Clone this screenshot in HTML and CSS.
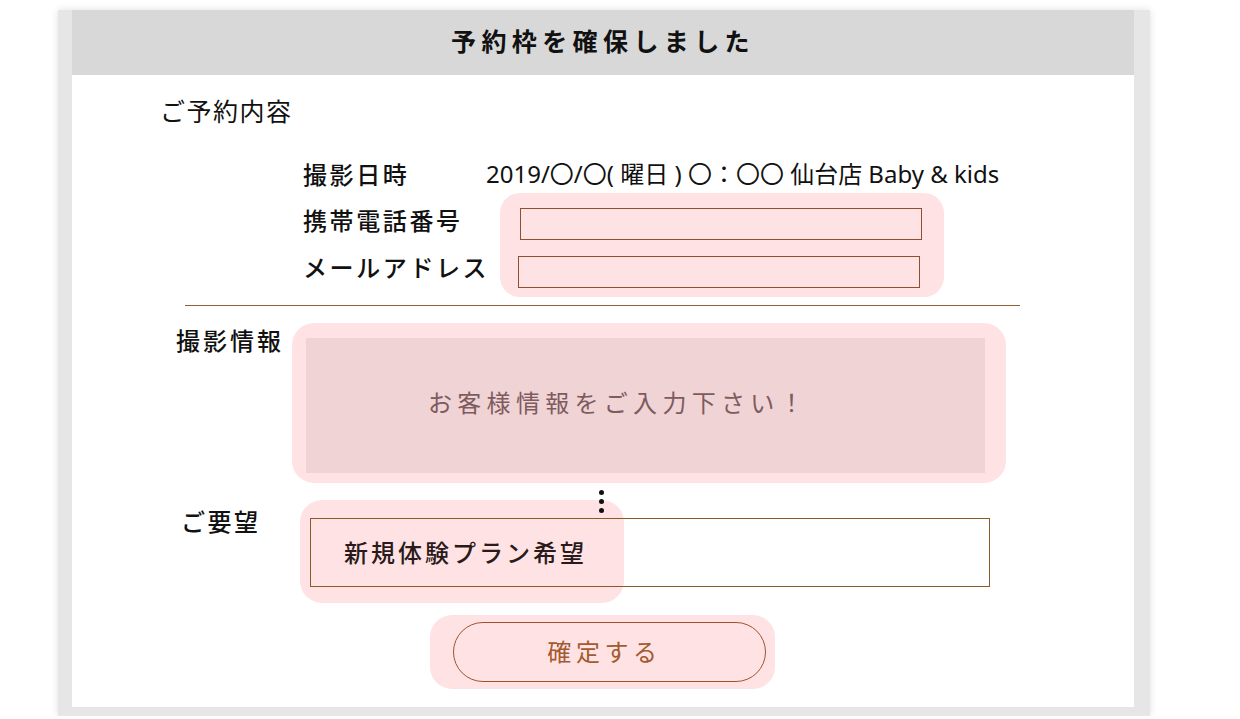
FILE: index.html
```html
<!DOCTYPE html>
<html lang="ja">
<head>
  <meta charset="UTF-8" />
  <meta name="viewport" content="width=device-width, initial-scale=1.0"/>
  <title>予約枠を確保しました</title>
  <link rel="stylesheet" href="styles.css">
</head>
<body>
  <div class="frame">
    <div class="frame-header">予約枠を確保しました</div>

    <div class="frame-body">
      <h2 class="section-title">ご予約内容</h2>

      <div class="detail-row">
        <div class="detail-label">撮影日時</div>
        <div class="detail-value">2019/〇/〇( 曜日 ) 〇：〇〇 仙台店 Baby &amp; kids</div>
      </div>

      <div class="contact">
        <div class="contact-labels">
          <div class="detail-label">携帯電話番号</div>
          <div class="detail-label">メールアドレス</div>
        </div>
        <div class="contact-box">
          <input class="contact-input" type="tel">
          <input class="contact-input second" type="email">
        </div>
      </div>

      <hr class="divider">

      <div class="info-row">
        <div class="info-label">撮影情報</div>
        <div class="info-box">
          <div class="info-inner">お客様情報をご入力下さい！</div>
        </div>
      </div>

      <div class="request-row">
        <div class="request-label">ご要望</div>
        <div class="request-field">
          <div class="request-highlight"></div>
          <div class="request-dots">
            <span></span><span></span><span></span>
          </div>
          <div class="request-text">新規体験プラン希望</div>
        </div>
      </div>

      <div class="confirm-box">
        <button class="confirm-btn">確定する</button>
      </div>
    </div>
  </div>
</body>
</html>
```

FILE: styles.css
```css
body {
  margin: 0;
  padding: 0;
  background: #fff;
  font-family: "Noto Sans CJK JP", "Noto Sans", sans-serif;
  color: #111;
}

.frame {
  box-sizing: border-box;
  width: 1092px;
  height: 706px;
  margin: 10px 0 0 58px;
  border-left: 14px solid #e6e6e6;
  border-right: 16px solid #e6e6e6;
  border-bottom: 9px solid #e6e6e6;
  box-shadow: 0 0 8px rgba(0, 0, 0, 0.12);
  background: #fff;
}

.frame-header {
  box-sizing: border-box;
  height: 65px;
  padding-bottom: 5px;
  background: #d8d8d8;
  display: flex;
  align-items: center;
  justify-content: center;
  font-size: 25px;
  font-weight: 700;
  letter-spacing: 5.4px;
  color: #111;
}

.frame-body {
  position: relative;
  z-index: 0;
  padding-top: 19px;
}

.section-title {
  margin: 0 0 0 88px;
  font-size: 25px;
  font-weight: 400;
  line-height: 32px;
  letter-spacing: 1.5px;
}

.detail-row {
  display: flex;
  align-items: center;
  margin: 31px 0 0 231px;
  height: 34px;
}

.detail-label {
  font-size: 24px;
  font-weight: 500;
  line-height: 32px;
  letter-spacing: 2.6px;
}

.detail-row .detail-label {
  width: 183px;
}

.detail-value {
  font-family: "Noto Sans", "Noto Sans CJK JP", sans-serif;
  font-size: 24px;
  line-height: 34px;
  letter-spacing: 0;
}

.contact {
  display: flex;
  margin: 2px 0 0 231px;
}

.contact-labels {
  width: 197px;
  padding-top: 11px;
  display: flex;
  flex-direction: column;
  gap: 15px;
}

.contact-box {
  width: 444px;
  height: 104px;
  box-sizing: border-box;
  padding: 15px 22px 9px 20px;
  background: #ffe3e4;
  border-radius: 20px;
  display: flex;
  flex-direction: column;
  gap: 16px;
}

.contact-input {
  box-sizing: border-box;
  width: 402px;
  height: 32px;
  margin: 0;
  border: 1.5px solid #8e4f33;
  background: #ffe3e4;
  outline: none;
}

.contact-input.second {
  margin-left: -2px;
}

.divider {
  width: 835px;
  margin: 8px 0 0 113px;
  border: none;
  border-top: 1px solid #8f5f35;
  height: 0;
}

.info-row {
  display: flex;
  margin: 17px 0 0 104px;
}

.info-label {
  width: 116px;
  font-size: 24px;
  font-weight: 500;
  line-height: 32px;
  margin-top: 1px;
  letter-spacing: 3px;
}

.info-box {
  width: 714px;
  height: 160px;
  box-sizing: border-box;
  padding: 15px 21px 10px 14px;
  background: #ffe3e4;
  border-radius: 22px;
}

.info-inner {
  box-sizing: border-box;
  height: 100%;
  padding: 0 0 9px 122px;
  background: #f0d3d5;
  display: flex;
  align-items: center;
  font-size: 24px;
  letter-spacing: 5.3px;
  color: #7d5b5e;
}

.request-row {
  display: flex;
  align-items: flex-start;
  margin: 17px 0 0 109px;
}

.request-label {
  width: 129px;
  margin-top: 5px;
  font-size: 24px;
  font-weight: 500;
  line-height: 32px;
  letter-spacing: 2.5px;
}

.request-field {
  position: relative;
  box-sizing: border-box;
  width: 680px;
  height: 69px;
  margin-top: 18px;
  border: 1px solid #8b5a2b;
  display: flex;
  align-items: center;
  padding: 0 0 3px 33px;
}

.request-highlight {
  position: absolute;
  left: -11px;
  top: -19px;
  width: 324px;
  height: 103px;
  background: #ffe3e4;
  border-radius: 22px;
  z-index: -1;
}

.request-dots {
  position: absolute;
  left: 288px;
  top: -29px;
  display: flex;
  flex-direction: column;
  gap: 4px;
}

.request-dots span {
  width: 5px;
  height: 5px;
  border-radius: 50%;
  background: #111;
}

.request-text {
  font-size: 24px;
  font-weight: 500;
  letter-spacing: 3px;
  color: #2b1a1a;
}

.confirm-box {
  box-sizing: border-box;
  width: 345px;
  height: 74px;
  margin: 28px 0 0 358px;
  padding: 7px 0 0 23px;
  background: #ffe3e4;
  border-radius: 22px;
}

.confirm-btn {
  box-sizing: border-box;
  width: 313px;
  height: 60px;
  padding: 0 10px 3px 0;
  border: 1.5px solid #a0522d;
  border-radius: 30px;
  background: transparent;
  font-family: "Noto Sans CJK JP", sans-serif;
  font-size: 24px;
  letter-spacing: 4.6px;
  color: #a35a2e;
  cursor: pointer;
}
```
